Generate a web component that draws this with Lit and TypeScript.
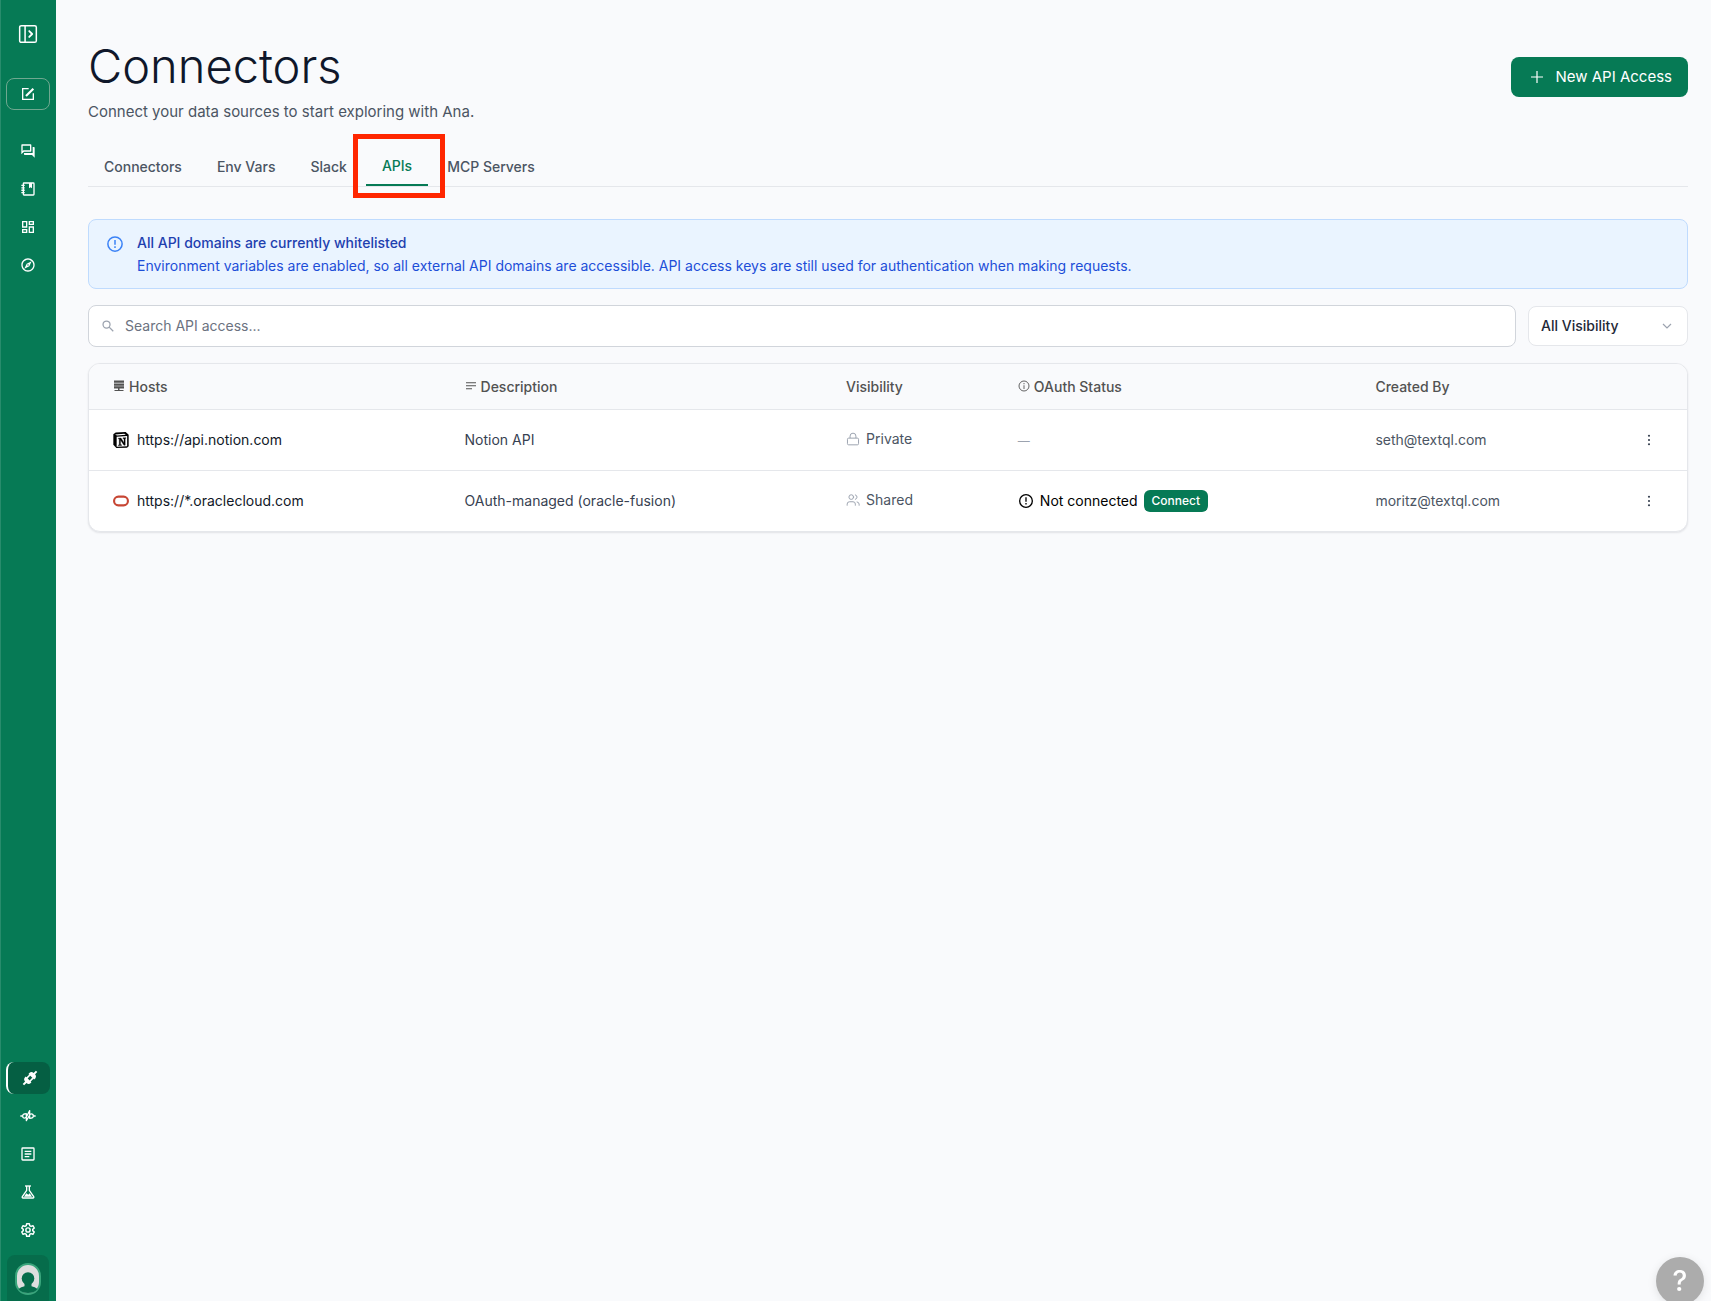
import { LitElement, html, css, svg, nothing } from "lit";
import { customElement, property, state } from "lit/decorators.js";
import { classMap } from "lit/directives/class-map.js";

const icons: Record<string, unknown> = {
  panel: svg`<g fill="none" stroke="currentColor" stroke-width="1.800" stroke-linejoin="round" stroke-linecap="round"><rect x="2" y="2" width="20" height="20" rx="2"/><path d="M8.500 2v20"/><path d="M13.500 8.500l3.500 3.500-3.500 3.500" stroke-width="2.200"/></g>`,
  compose: svg`<g fill="none" stroke="currentColor" stroke-width="2"><path d="M13 4H4v16h16v-9"/><path d="M9 15l11-11" stroke-width="3.200"/></g>`,
  chat: svg`<path fill="currentColor" d="M15 4v7H5.170L4 12.170V4h11m1-2H3c-.55 0-1 .45-1 1v14l4-4h10c.55 0 1-.45 1-1V3c0-.55-.45-1-1-1zm5 4h-2v9H6v2c0 .55.45 1 1 1h11l4 4V7c0-.55-.45-1-1-1z"/>`,
  notebook: svg`<g fill="none" stroke="currentColor" stroke-width="2"><rect x="5" y="3" width="16" height="18" rx="1"/><path d="M2 6.500h5M2 10.200h5M2 13.900h5M2 17.500h5"/><path d="M13.500 3h4.500v8l-2.250-1.700L13.500 11z" fill="currentColor" stroke="none"/></g>`,
  dashboard: svg`<path fill="currentColor" d="M19 5v2h-4V5h4M9 5v6H5V5h4m10 8v6h-4v-6h4M9 17v2H5v-2h4M21 3h-8v6h8V3zM11 3H3v10h8V3zm10 8h-8v10h8V11zm-10 4H3v6h8v-6z"/>`,
  compass: svg`<path fill="currentColor" d="M12 2C6.480 2 2 6.480 2 12s4.480 10 10 10 10-4.480 10-10S17.520 2 12 2zm0 18c-4.410 0-8-3.590-8-8s3.590-8 8-8 8 3.590 8 8-3.590 8-8 8zm-5.500-2.500l7.510-3.490L17.500 6.500 9.990 9.990 6.500 17.500zm5.500-6.600c.61 0 1.100.49 1.100 1.100s-.49 1.100-1.100 1.100-1.100-.49-1.100-1.100.49-1.100 1.100-1.100z"/>`,
  plug: svg`<g transform="rotate(45 12 12)" fill="currentColor"><path d="M6 9.300h12V6.800c0-2.200-2-3.900-4.500-4V-2h-3v4.800c-2.500.1-4.500 1.800-4.500 4z"/><path d="M6 15h12v2c0 2.200-2 3.900-4.500 4v5h-3v-5c-2.500-.1-4.500-1.800-4.500-4z"/><path d="M7.500 9h2.400v7H7.500zM14.100 9h2.400v7h-2.400z"/></g>`,
  pulse: svg`<g fill="none" stroke="currentColor" stroke-width="1.900" stroke-linejoin="round"><path d="M.5 12H4M20 12h3.500"/><path d="M9.500 19V8.500C6 8.500 4 10 4 12s1.500 3.200 3 3.200 2-.7 3-2.700l4.500-8.500v11.500c3.500 0 5.500-1.500 5.500-3.500s-1.500-3.200-3-3.200-2 .7-3 2.700z"/></g>`,
  article: svg`<g fill="none" stroke="currentColor" stroke-width="2"><rect x="3" y="3" width="18" height="18" rx="1"/><path d="M7 8h10M7 12h10M7 16h7"/></g>`,
  flask: svg`<g fill="none" stroke="currentColor" stroke-width="2" stroke-linejoin="round"><path d="M7.500 3h9"/><path d="M10 3v6.500L3.500 19c-.6 1 0 2 1 2h15c1 0 1.600-1 1-2L14 9.500V3"/><path d="M9.500 14L6 19h12l-3.500-5-2 2z" fill="currentColor" stroke="none"/></g>`,
  gear: svg`<g fill="none" stroke="currentColor" stroke-width="2.200" stroke-linejoin="round"><path d="M10 2.500h4l.6 3 1.900 1.100 2.900-1 2 3.400-2.300 2v2l2.300 2-2 3.400-2.900-1-1.900 1.100-.6 3h-4l-.6-3-1.900-1.100-2.900 1-2-3.400 2.300-2v-2l-2.300-2 2-3.400 2.900 1 1.900-1.100z"/><circle cx="12" cy="12" r="3.200"/></g>`,
  plus: svg`<path d="M12 3v18M3 12h18" fill="none" stroke="currentColor" stroke-width="1.800"/>`,
  alert: svg`<g fill="none" stroke="currentColor" stroke-width="2"><circle cx="12" cy="12" r="9.500"/><path d="M12 6.500v6.500M12 15v2.200"/></g>`,
  search: svg`<g fill="none" stroke="currentColor" stroke-width="2.200"><circle cx="9.500" cy="9.500" r="6"/><path d="M14 14l7 7"/></g>`,
  chevron: svg`<path d="M4 8l8 8 8-8" fill="none" stroke="currentColor" stroke-width="2.400"/>`,
  hosts: svg`<path fill="currentColor" d="M2 1h20v4.600H2zM2 6.800h20v4.600H2zM2 12.600h20V17h-9v3h8v2H3v-2h7v-3H2z"/>`,
  lines: svg`<path d="M2 5.500h20M2 11.500h20M2 17.500h12" fill="none" stroke="currentColor" stroke-width="2"/>`,
  info: svg`<g fill="none" stroke="currentColor" stroke-width="1.800"><circle cx="12" cy="12" r="10"/><path d="M12 10.500V18M12 6v2.500"/></g>`,
  lock: svg`<g fill="none" stroke="currentColor" stroke-width="1.700" stroke-linejoin="round"><rect x="2.500" y="10.500" width="19" height="11.500" rx="2"/><path d="M7 10.500V7a5 5 0 0 1 10 0v3.500"/></g>`,
  users: svg`<g fill="none" stroke="currentColor" stroke-width="1.700" stroke-linecap="round"><circle cx="9" cy="7" r="4"/><path d="M2 21v-2a4 4 0 0 1 4-4h6a4 4 0 0 1 4 4v2M16 3.200a4 4 0 0 1 0 7.700M19 15.300a4 4 0 0 1 3.500 3.700v2"/></g>`,
  more: svg`<g fill="currentColor"><circle cx="12" cy="3.500" r="2.200"/><circle cx="12" cy="12" r="2.200"/><circle cx="12" cy="20.500" r="2.200"/></g>`,
  notion: svg`<path d="M.5 3.500L4 .8l15-.7L23.500 4v17.500L21 23.500 5 24 .5 19z" fill="#000"/><path d="M3 3.700l14-1.200 2.200 1.800L6 5.200z" fill="#fff"/><path d="M5.500 7l15.700-1v15.300L5.500 22.300z" fill="#fff"/><path d="M8 9.300l4-.2 4.500 7.200V10l-1.600-.3v-.9l4.600-.3v.9l-1.200.4v9.900l-1.900.2-5.200-8v7l1.700.4v.8l-4.900.3v-.9l1.400-.4v-8.600L8 10.300z" fill="#000" stroke="#000" stroke-width=".5"/>`,
  oracle: svg`<rect x="1.600" y="5.500" width="20.800" height="13" rx="6.500" fill="none" stroke="#c74634" stroke-width="3.200"/>`,
};

@customElement("ui-icon")
class UiIcon extends LitElement {
  @property() name = "";
  static styles = css`
    :host { display: inline-flex; flex: none; width: 16px; height: 16px; }
    .glyph { display: block; width: 100%; height: 100%; overflow: visible; }
  `;
  render() {
    return html`<svg class="glyph" viewBox="0 0 24 24" aria-hidden="true">${icons[this.name]}</svg>`;
  }
}

@customElement("app-sidebar")
class AppSidebar extends LitElement {
  static styles = css`
    :host { display: flex; flex-direction: column; flex: none; box-sizing: border-box; width: 56px; padding: 18px 6px 0 5px; background: #067a55; border-left: 1px solid #288c6c; color: #fff; }
    .group { display: flex; flex-direction: column; gap: 6px; }
    .item { display: flex; align-items: center; justify-content: center; box-sizing: border-box; width: 44px; height: 32px; padding: 0; border: 0; border-radius: 8px; background: none; color: inherit; }
    .compose { margin: 28px 0 25px; border: 1px solid #6fa890; }
    .toggle-icon { width: 20px; height: 20px; }
    .grow { flex: 1; }
    .active { background: #055f43; border-left: 2px solid #fff; padding-left: 2px; }
    .account { display: flex; justify-content: center; box-sizing: border-box; width: 42px; height: 52px; margin: 9px 1px -6px; padding: 8px 0 0; border: 0; border-radius: 8px; background: #066c4b; }
    .avatar { width: 26px; height: 32px; }
  `;
  render() {
    const item = (name: string, label: string, active = false) => html`
      <button class=${classMap({ item: true, active })} aria-label=${label}>
        <ui-icon name=${name}></ui-icon>
      </button>`;
    return html`
      <button class="item" aria-label="Expand sidebar"><ui-icon class="toggle-icon" name="panel"></ui-icon></button>
      <button class="item compose" aria-label="New chat"><ui-icon name="compose"></ui-icon></button>
      <nav class="group" aria-label="Main">
        ${item("chat", "Chats")} ${item("notebook", "Notebooks")} ${item("dashboard", "Dashboards")} ${item("compass", "Explore")}
      </nav>
      <div class="grow"></div>
      <nav class="group" aria-label="Tools">
        ${item("plug", "Connectors", true)} ${item("pulse", "Activity")} ${item("article", "Reports")} ${item("flask", "Experiments")} ${item("gear", "Settings")}
      </nav>
      <button class="account" aria-label="Account">
        <svg class="avatar" viewBox="0 0 26 32" aria-hidden="true">
          <rect x="1" y="1" width="24" height="30" rx="12" fill="#dedede" stroke="#3aa57c" stroke-width="2"/>
          <path d="M3.500 26Q6 23.800 9.500 23.300h7q3.500.5 6 2.700Q19.500 30 13 30T3.500 26z" fill="#066c4b"/>
          <path d="M9.500 19.500h7v5h-7z" fill="#066c4b"/>
          <circle cx="13" cy="15.500" r="6.300" fill="#066c4b"/>
        </svg>
      </button>`;
  }
}

interface ApiRow {
  icon: string;
  host: string;
  description: string;
  visibility: "Private" | "Shared";
  connectable: boolean;
  owner: string;
}

const rows: ApiRow[] = [
  { icon: "notion", host: "https://api.notion.com", description: "Notion API", visibility: "Private", connectable: false, owner: "seth@textql.com" },
  { icon: "oracle", host: "https://*.oraclecloud.com", description: "OAuth-managed (oracle-fusion)", visibility: "Shared", connectable: true, owner: "moritz@textql.com" },
];

@customElement("api-table")
class ApiTable extends LitElement {
  static styles = css`
    :host { display: block; overflow: hidden; border: 1px solid #e5e7eb; border-radius: 12px; background: #fff; box-shadow: 0 1px 2px rgba(15, 23, 42, 0.1); }
    .table { width: 100%; border-collapse: collapse; table-layout: fixed; font-size: 14px; line-height: 20px; text-align: left; color: #4b5563; }
    .c-host { width: 22%; }
    .c-desc { width: 24%; }
    .c-vis { width: 11%; }
    .c-auth { width: 22%; }
    .c-more { width: 74px; }
    .head { height: 45px; padding: 0 24px; background: #f9fafc; font-weight: 500; color: #525252; }
    .head:nth-child(3), .cell:nth-child(3) { padding-left: 22px; }
    .head:nth-child(4), .cell:nth-child(4) { padding-left: 18px; }
    .cell { height: 60px; padding: 0 24px; border-top: 1px solid #e5e7eb; }
    .row { display: flex; align-items: center; gap: 8px; }
    .label { display: flex; align-items: center; gap: 4px; }
    .tiny { width: 12px; height: 12px; }
    .label .tiny { margin-bottom: 2px; }
    .host-name { color: #111827; }
    .desc { color: #374151; }
    .muted { width: 14px; height: 14px; color: #9ca3af; }
    .vis { display: flex; align-items: center; gap: 6px; padding-bottom: 2px; }
    .dash { font-size: 12px; color: #9ca3af; }
    .status { gap: 6px; color: #000; }
    .connect { height: 22px; padding: 0 8px; border: 0; border-radius: 6px; background: #067a55; color: #fff; font: 500 12px/16px Inter, "Liberation Sans", sans-serif; }
    .more { display: flex; align-items: center; justify-content: center; width: 24px; height: 24px; padding: 0; border: 0; background: none; color: #374151; }
  `;
  render() {
    return html`
      <table class="table">
        <colgroup><col class="c-host" /><col class="c-desc" /><col class="c-vis" /><col class="c-auth" /><col /><col class="c-more" /></colgroup>
        <thead>
          <tr>
            <th class="head" scope="col"><span class="label"><ui-icon class="tiny" name="hosts"></ui-icon>Hosts</span></th>
            <th class="head" scope="col"><span class="label"><ui-icon class="tiny" name="lines"></ui-icon>Description</span></th>
            <th class="head" scope="col">Visibility</th>
            <th class="head" scope="col"><span class="label"><ui-icon class="tiny" name="info"></ui-icon>OAuth Status</span></th>
            <th class="head" scope="col">Created By</th>
            <th class="head" scope="col"></th>
          </tr>
        </thead>
        <tbody>
          ${rows.map((r) => html`
            <tr>
              <td class="cell"><span class="row host-name"><ui-icon name=${r.icon}></ui-icon>${r.host}</span></td>
              <td class="cell desc">${r.description}</td>
              <td class="cell"><span class="vis"><ui-icon class="muted" name=${r.visibility === "Private" ? "lock" : "users"}></ui-icon>${r.visibility}</span></td>
              <td class="cell">${r.connectable
                ? html`<span class="row status"><ui-icon name="alert"></ui-icon>Not connected<button class="connect">Connect</button></span>`
                : html`<span class="dash">—</span>`}</td>
              <td class="cell">${r.owner}</td>
              <td class="cell"><button class="more" aria-label=${`Actions for ${r.host}`}><ui-icon class="tiny" name="more"></ui-icon></button></td>
            </tr>`)}
        </tbody>
      </table>`;
  }
}

@customElement("app-root")
class AppRoot extends LitElement {
  @state() private tab = "APIs";

  static styles = css`
    :host { display: flex; height: 100vh; overflow: hidden; background: #f9fafc; color: #111827; font-family: Inter, "Liberation Sans", sans-serif; font-size: 14px; line-height: 20px; }
    .main { flex: 1; min-width: 0; overflow: hidden; padding: 40px 23px 0 32px; }
    .header { display: flex; align-items: center; justify-content: space-between; }
    .title { margin: 0; font-size: 47px; line-height: 52px; font-weight: 300; color: #0f172a; }
    .subtitle { margin: 8px 0 0; font-size: 15px; line-height: 24px; color: #4b5563; }
    .new { display: flex; align-items: center; gap: 10px; height: 40px; margin-bottom: 10px; padding: 0 16px 0 18px; border: 0; border-radius: 8px; background: #067a55; color: #fff; font: 400 15px/24px Inter, "Liberation Sans", sans-serif; }
    .tabs { display: flex; gap: 3px; margin-top: 20px; border-bottom: 1px solid #e5e7eb; }
    .tab { position: relative; height: 42px; padding: 4px 16px 0; border: 0; background: none; color: #4b5563; font: 500 14px/20px Inter, "Liberation Sans", sans-serif; }
    .tab.current { border-bottom: 2px solid #067a55; color: #067a55; }
    .marker { position: absolute; inset: -10px -17px -14px -13px; border: 5px solid #ff2600; pointer-events: none; }
    .notice { display: flex; gap: 13px; margin: 32px 0 16px; padding: 13px 17px 12px; border: 1px solid #bfdbfe; border-radius: 8px; background: #eaf4ff; color: #1d4ed8; }
    .notice-icon { width: 18px; height: 18px; margin: 2px 0; color: #3b82f6; }
    .notice-title { margin: 0 0 3px; font-weight: 500; color: #1e40af; }
    .notice-text { margin: 0; }
    .filters { display: flex; align-items: center; gap: 12px; margin-bottom: 16px; }
    .search { display: flex; flex: 1; align-items: center; gap: 10px; height: 40px; padding: 0 12px; border: 1px solid #d1d5db; border-radius: 8px; background: #fff; }
    .search-icon { width: 14px; height: 14px; color: #9ca3af; }
    .input { flex: 1; min-width: 0; height: 38px; padding: 0 0 2px; box-sizing: border-box; border: 0; outline: 0; background: none; color: #111827; font: 400 14px/20px Inter, "Liberation Sans", sans-serif; }
    .input::placeholder { color: #6b7280; opacity: 1; }
    .select-wrap { display: grid; align-items: center; width: 160px; }
    .select { grid-area: 1 / 1; box-sizing: border-box; width: 100%; height: 40px; padding: 0 12px; border: 1px solid #e5e7eb; border-radius: 8px; background: #fff; appearance: none; color: #1f2937; font: 500 14px/20px Inter, "Liberation Sans", sans-serif; }
    .chevron { grid-area: 1 / 1; justify-self: end; width: 12px; height: 12px; margin-right: 15px; color: #9ca3af; pointer-events: none; }
    .help { position: fixed; right: 7px; bottom: -4px; width: 48px; height: 48px; padding: 0; border: 0; border-radius: 50%; background: #acacac; box-shadow: 0 2px 10px rgba(0, 0, 0, 0.1); color: #fff; font: 500 28px/48px Inter, "Liberation Sans", sans-serif; }
  `;

  render() {
    return html`
      <app-sidebar></app-sidebar>
      <main class="main">
        <header class="header">
          <div>
            <h1 class="title">Connectors</h1>
            <p class="subtitle">Connect your data sources to start exploring with Ana.</p>
          </div>
          <button class="new"><ui-icon name="plus"></ui-icon>New API Access</button>
        </header>
        <nav class="tabs" role="tablist" aria-label="Connector types">
          ${["Connectors", "Env Vars", "Slack", "APIs", "MCP Servers"].map((t) => html`
            <button class=${classMap({ tab: true, current: t === this.tab })} role="tab" aria-selected=${t === this.tab ? "true" : "false"} @click=${() => (this.tab = t)}>
              ${t}${t === "APIs" ? html`<span class="marker"></span>` : nothing}
            </button>`)}
        </nav>
        <section class="notice">
          <ui-icon class="notice-icon" name="alert"></ui-icon>
          <div>
            <p class="notice-title">All API domains are currently whitelisted</p>
            <p class="notice-text">Environment variables are enabled, so all external API domains are accessible. API access keys are still used for authentication when making requests.</p>
          </div>
        </section>
        <div class="filters">
          <label class="search">
            <ui-icon class="search-icon" name="search"></ui-icon>
            <input class="input" type="search" aria-label="Search API access" placeholder="Search API access..." />
          </label>
          <div class="select-wrap">
            <select class="select" aria-label="Visibility filter"><option>All Visibility</option></select>
            <ui-icon class="chevron" name="chevron"></ui-icon>
          </div>
        </div>
        <api-table></api-table>
      </main>
      <button class="help" aria-label="Help">?</button>`;
  }
}
